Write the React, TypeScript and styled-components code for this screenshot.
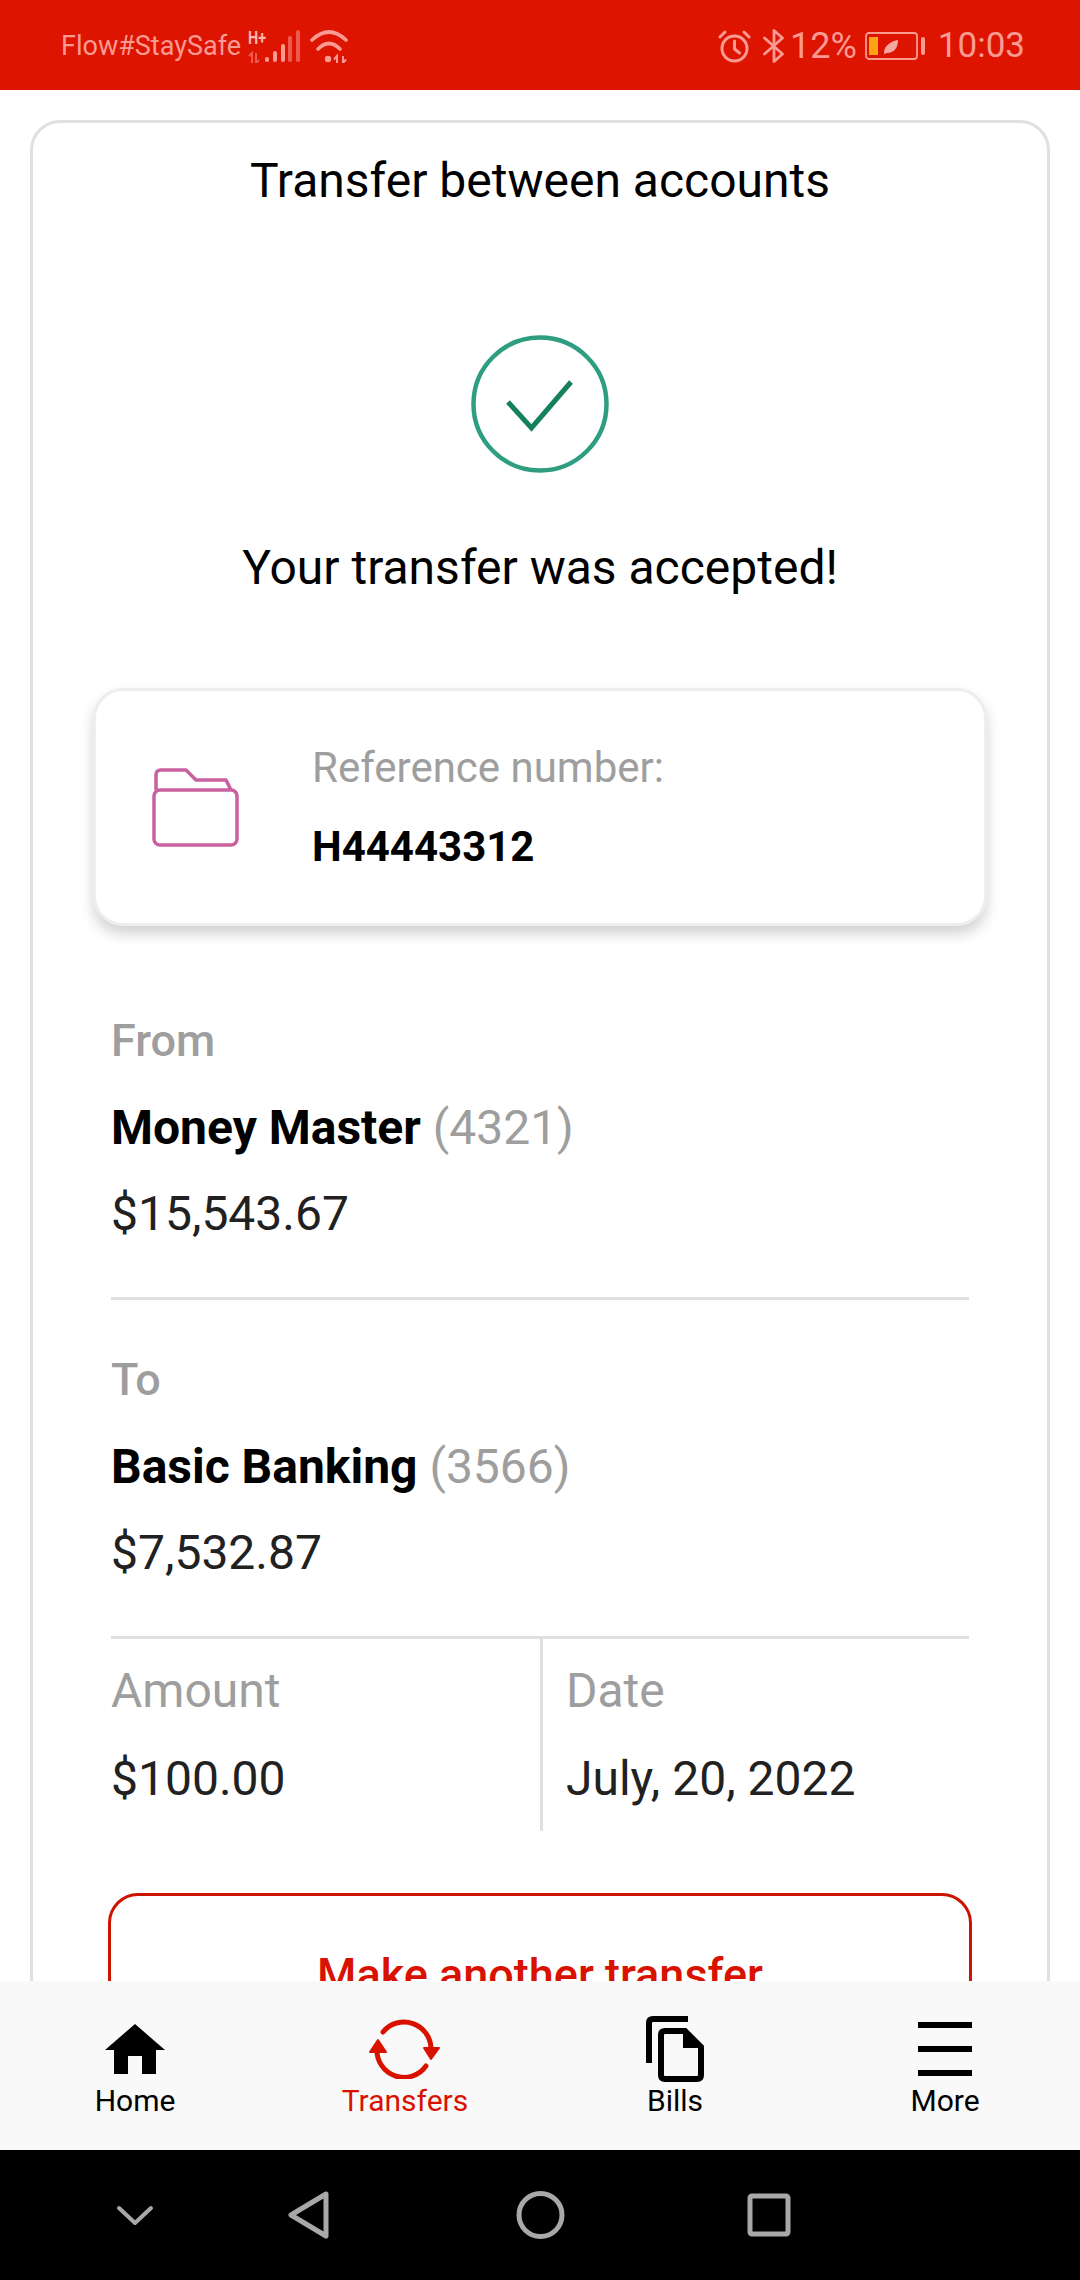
import React from "react";
import styled, { createGlobalStyle } from "styled-components";

const Global = createGlobalStyle`
  html, body {
    margin: 0;
    padding: 0;
    background: #fff;
  }
  * {
    box-sizing: border-box;
  }
`;

const Screen = styled.div`
  width: 1080px;
  height: 2280px;
  display: flex;
  flex-direction: column;
  overflow: hidden;
  font-family: Roboto, "Liberation Sans", sans-serif;
  background: #fff;
`;

const StatusBar = styled.div`
  height: 90px;
  flex: none;
  display: flex;
  align-items: center;
  justify-content: space-between;
  padding: 2px 55px 0 61px;
  background: #dc1400;
  color: #fb9a92;
`;

const StatusGroup = styled.div`
  display: flex;
  align-items: center;
`;

const Carrier = styled.span`
  font-size: 27px;
  line-height: 34px;
`;

const SignalBox = styled.div`
  position: relative;
  width: 52px;
  height: 33px;
  margin-left: 7px;
`;

const NetworkBadge = styled.span`
  position: absolute;
  left: 0;
  top: -1px;
  font-size: 18px;
  line-height: 18px;
  font-weight: 700;
  color: #fdb5ae;
  transform: scaleX(0.8);
  transform-origin: left;
`;

const StatusText = styled.span`
  font-size: 35px;
  line-height: 40px;
`;

const Percent = styled(StatusText)`
  margin-left: 5px;
  font-size: 36px;
`;

const Clock = styled(StatusText)`
  margin-left: 13px;
`;

const Content = styled.div`
  flex: 1;
  min-height: 0;
  overflow: hidden;
  padding: 30px 30px 0;
`;

const Card = styled.div`
  border: 3px solid #e0e0e0;
  border-radius: 30px;
  padding: 28px 60px 40px;
`;

const Title = styled.h1`
  margin: 0;
  font-size: 48px;
  line-height: 60px;
  font-weight: 400;
  text-align: center;
  color: #000;
`;

const CheckWrap = styled.div`
  display: flex;
  justify-content: center;
  margin-top: 124px;
`;

const Accepted = styled(Title)`
  margin-top: 65px;
`;

const ReferenceCard = styled.div`
  height: 238px;
  margin-top: 90px;
  display: flex;
  align-items: center;
  padding-left: 55px;
  gap: 72px;
  background: #fff;
  border: 3px solid #eee;
  border-radius: 30px;
  box-shadow: 0 8px 14px rgba(0, 0, 0, 0.18);
`;

const ReferenceText = styled.div`
  display: flex;
  flex-direction: column;
  gap: 19px;
`;

const Line = styled.div<{ $tone?: "label" | "value" | "strong" }>`
  font-size: 48px;
  line-height: 60px;
  white-space: nowrap;
  color: ${(p) => (p.$tone === "label" ? "#9e9e9e" : p.$tone === "strong" ? "#000" : "#212121")};
  font-weight: ${(p) => (p.$tone === "strong" ? 700 : 400)};
`;

const ReferenceLine = styled(Line)`
  font-size: 42px;
`;

const Account = styled.section<{ $top: number }>`
  margin: 0 18px;
  padding: ${(p) => p.$top}px 0 53px;
  display: flex;
  flex-direction: column;
  gap: 26.5px;
  border-bottom: 3px solid #e0e0e0;
`;

const SectionLabel = styled(Line)`
  font-size: 45px;
  font-weight: 500;
`;

const AccountNumber = styled.span`
  font-weight: 400;
  color: #9e9e9e;
`;

const Summary = styled.div`
  margin: 0 18px;
  display: grid;
  grid-template-columns: 432px 1fr;
`;

const SummaryCell = styled.div<{ $divided?: boolean }>`
  display: flex;
  flex-direction: column;
  gap: 28px;
  padding: 22px 0 22px ${(p) => (p.$divided ? "0" : "23px")};
  border-right: ${(p) => (p.$divided ? "3px solid #e0e0e0" : "none")};
`;

const OutlineButton = styled.button`
  display: block;
  width: calc(100% - 30px);
  height: 162px;
  margin: 62px 15px 0;
  background: #fff;
  border: 3px solid #cc1400;
  border-radius: 30px;
  font-family: inherit;
  font-size: 45px;
  font-weight: 500;
  color: #d91200;
`;

const TabBar = styled.nav`
  height: 169px;
  flex: none;
  display: grid;
  grid-template-columns: repeat(4, 1fr);
  padding-top: 35px;
  background: #f9f9f9;
`;

const Tab = styled.div<{ $active?: boolean }>`
  display: flex;
  flex-direction: column;
  align-items: center;
  color: ${(p) => (p.$active ? "#d91200" : "#000")};
`;

const TabIcon = styled.div`
  height: 66px;
  display: flex;
  align-items: center;
  justify-content: center;
`;

const TabLabel = styled.span`
  margin-top: 2px;
  font-size: 30px;
  line-height: 34px;
`;

const SystemBar = styled.div`
  height: 130px;
  flex: none;
  display: flex;
  align-items: center;
  padding-left: 116px;
  background: #000;
`;

const SystemKey = styled.svg<{ $gap?: number }>`
  display: block;
  margin-left: ${(p) => p.$gap ?? 0}px;
  fill: none;
  stroke: #a8a8a8;
  stroke-width: 5;
  stroke-linejoin: round;
  stroke-linecap: round;
`;

const Folder = () => (
  <svg width="89" height="81" viewBox="0 0 89 81" fill="none" stroke="#c9609f" strokeWidth="3.5" strokeLinejoin="round" style={{ flex: "none" }}>
    <rect x="3" y="23" width="83" height="55" rx="6" />
    <path d="M5 23V8q0-5 5-5H35L45 13H75L80 23" />
  </svg>
);

const App = () => {
  return (
    <Screen>
      <Global />
      <StatusBar>
        <StatusGroup>
          <Carrier>Flow#StaySafe</Carrier>
          <SignalBox>
            <NetworkBadge>H+</NetworkBadge>
            <svg width="52" height="33" viewBox="0 0 52 33" fill="#fb9a92">
              <path d="M4 33v-10l-3 3M8 23v10l3-3" stroke="#ee5a4e" strokeWidth="2" fill="none" />
              <rect x="17" y="27" width="4" height="5" rx="2" />
              <rect x="25" y="21" width="4" height="11" rx="2" />
              <rect x="33" y="14" width="4" height="18" rx="2" />
              <rect x="40" y="6" width="4" height="26" rx="2" fill="#ee5a4e" />
              <rect x="48" y="0" width="4" height="32" rx="2" fill="#ee5a4e" />
            </svg>
          </SignalBox>
          <svg width="39" height="33" viewBox="0 0 39 33" fill="none" stroke="#fb9a92" strokeWidth="3.600" strokeLinecap="round" style={{ marginLeft: 10 }}>
            <path d="M2 10Q19-6 36 10" />
            <path d="M8 19Q19 8 30 19" />
            <circle cx="18" cy="29" r="3.200" fill="#fb9a92" stroke="none" />
            <path d="M27 33v-7l-3 3.500M33 26v7l3-3.500" strokeWidth="2" strokeLinecap="butt" />
          </svg>
        </StatusGroup>
        <StatusGroup>
          <svg width="33" height="33" viewBox="0 0 33 33" fill="none" stroke="#fb9a92" strokeWidth="3" strokeLinecap="round">
            <circle cx="16.500" cy="18.500" r="12.500" />
            <path d="M16.500 11v8l5 4M2 7l5-5M31 7l-5-5" />
          </svg>
          <svg width="22" height="34" viewBox="0 0 22 34" fill="none" stroke="#fb9a92" strokeWidth="2.800" strokeLinecap="round" strokeLinejoin="round" style={{ marginLeft: 12 }}>
            <path d="M1.500 9l18 16-8.500 7.500V1.500L19.500 9l-18 16" />
          </svg>
          <Percent>12%</Percent>
          <svg width="60" height="28" viewBox="0 0 60 28" fill="none" style={{ marginLeft: 8 }}>
            <rect x="1" y="1" width="51" height="26" rx="3" stroke="#fb9a92" strokeWidth="1.800" />
            <rect x="4" y="5" width="9" height="18" fill="#ffa514" />
            <path d="M19 21c0-8 8-12 14-13 0 8-4 13-11 13l-3 1z" fill="#f5a89f" />
            <rect x="56" y="5" width="4" height="18" rx="2" fill="#fb9a92" />
          </svg>
          <Clock>10:03</Clock>
        </StatusGroup>
      </StatusBar>

      <Content>
        <Card>
          <Title>Transfer between accounts</Title>
          <CheckWrap>
            <svg width="138" height="138" viewBox="0 0 138 138" fill="none" stroke="#2e9d80">
              <circle cx="69" cy="69" r="66.500" strokeWidth="4.500" />
              <path d="M37 67L60.500 93L100 47" stroke="#15805f" strokeWidth="5" />
            </svg>
          </CheckWrap>
          <Accepted>Your transfer was accepted!</Accepted>

          <ReferenceCard>
            <Folder />
            <ReferenceText>
              <ReferenceLine $tone="label">Reference number:</ReferenceLine>
              <ReferenceLine $tone="strong">H44443312</ReferenceLine>
            </ReferenceText>
          </ReferenceCard>

          <Account $top={85}>
            <SectionLabel $tone="label">From</SectionLabel>
            <Line $tone="strong">
              Money Master <AccountNumber>(4321)</AccountNumber>
            </Line>
            <Line>$15,543.67</Line>
          </Account>
          <Account $top={50}>
            <SectionLabel $tone="label">To</SectionLabel>
            <Line $tone="strong">
              Basic Banking <AccountNumber>(3566)</AccountNumber>
            </Line>
            <Line>$7,532.87</Line>
          </Account>

          <Summary>
            <SummaryCell $divided>
              <Line $tone="label">Amount</Line>
              <Line>$100.00</Line>
            </SummaryCell>
            <SummaryCell>
              <Line $tone="label">Date</Line>
              <Line>July, 20, 2022</Line>
            </SummaryCell>
          </Summary>

          <OutlineButton>Make another transfer</OutlineButton>
        </Card>
      </Content>

      <TabBar>
        <Tab>
          <TabIcon>
            <svg width="60" height="50" viewBox="0 0 60 50" fill="#000">
              <path d="M30 0L60 26H51V50H37V32H23V50H9V26H0z" />
            </svg>
          </TabIcon>
          <TabLabel>Home</TabLabel>
        </Tab>
        <Tab $active>
          <TabIcon>
            <svg width="74" height="60" viewBox="0 0 74 60" fill="none" stroke="#d91200" strokeWidth="5" strokeLinecap="round">
              <path d="M15 13A27 27 0 0 1 63 30" />
              <path d="M58 47A27 27 0 0 1 9 30" />
              <path d="M56 29H71L63 40z" fill="#d91200" strokeWidth="2" strokeLinejoin="round" />
              <path d="M10 21L2 33H18z" fill="#d91200" strokeWidth="2" strokeLinejoin="round" />
            </svg>
          </TabIcon>
          <TabLabel>Transfers</TabLabel>
        </Tab>
        <Tab>
          <TabIcon>
            <svg width="58" height="66" viewBox="0 0 58 66" fill="none" stroke="#000" strokeWidth="6">
              <path d="M3 47V7q0-4 4-4H42" />
              <path d="M15 19q0-4 4-4h20l16 16v28q0 4-4 4H19q-4 0-4-4z" />
              <path d="M37 15L55 32H37z" fill="#000" stroke="none" />
            </svg>
          </TabIcon>
          <TabLabel>Bills</TabLabel>
        </Tab>
        <Tab>
          <TabIcon>
            <svg width="54" height="54" viewBox="0 0 54 54" fill="#000">
              <rect y="0" width="54" height="6" />
              <rect y="24" width="54" height="6" />
              <rect y="48" width="54" height="6" />
            </svg>
          </TabIcon>
          <TabLabel>More</TabLabel>
        </Tab>
      </TabBar>

      <SystemBar>
        <SystemKey width="38" height="21" viewBox="0 0 38 21">
          <path d="M3 3l16 15 16-15" strokeWidth="4" />
        </SystemKey>
        <SystemKey $gap={134} width="41" height="48" viewBox="0 0 41 48">
          <path d="M38 3L3 24l35 21z" />
        </SystemKey>
        <SystemKey $gap={187} width="49" height="48" viewBox="0 0 49 48">
          <circle cx="24.500" cy="24" r="21.500" />
        </SystemKey>
        <SystemKey $gap={182} width="44" height="44" viewBox="0 0 44 44">
          <rect x="3" y="3" width="38" height="38" rx="2" />
        </SystemKey>
      </SystemBar>
    </Screen>
  );
};

export default App;
